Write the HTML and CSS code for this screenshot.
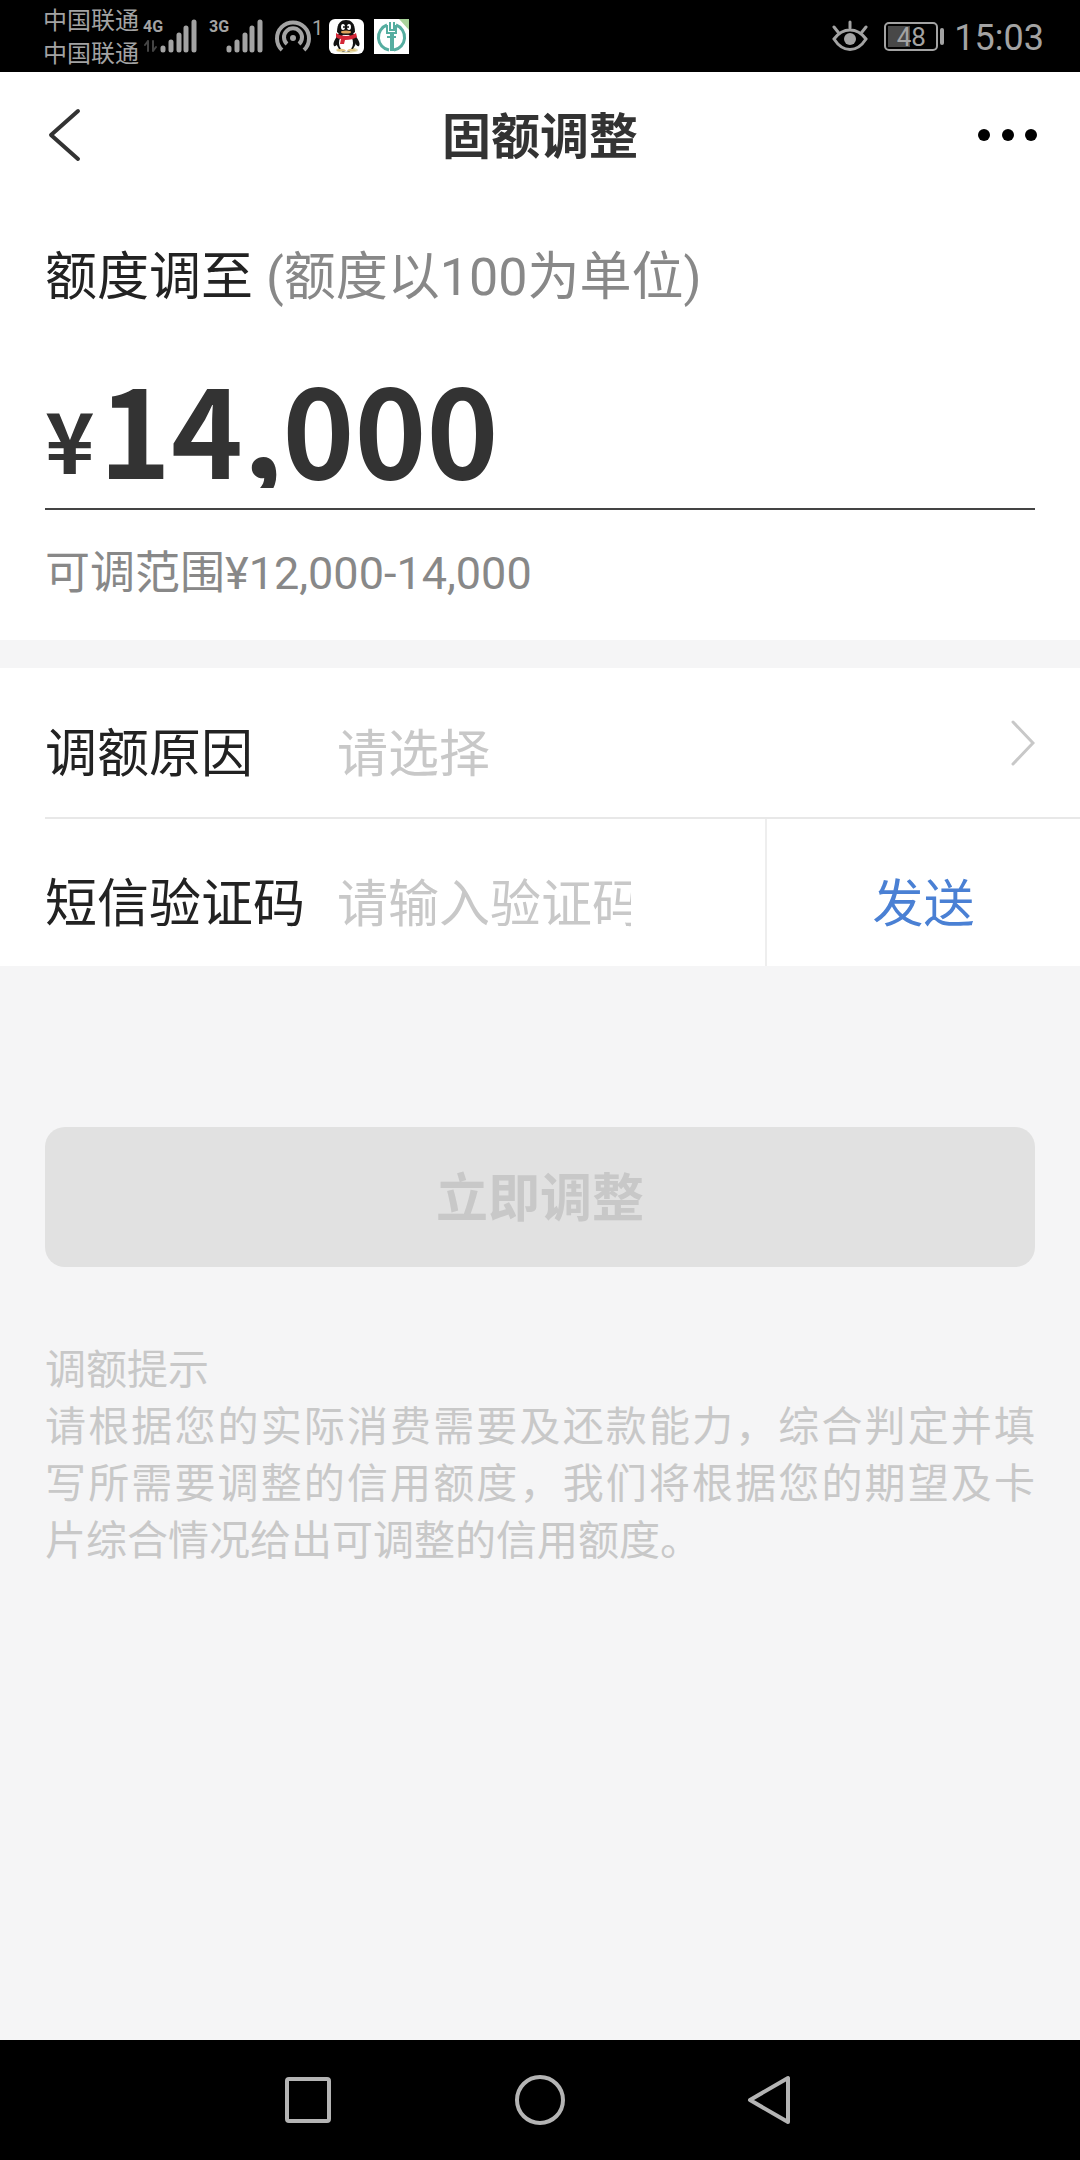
FILE: index.html
```html
<!DOCTYPE html>
<html lang="zh-CN">
<head>
<meta charset="utf-8">
<meta name="viewport" content="width=device-width, initial-scale=1">
<title>固额调整</title>
<link rel="stylesheet" href="styles.css">
</head>
<body>
<div class="screen">
  <div class="status">
    <div class="carriers"><span>中国联通</span><span>中国联通</span></div>
    <div class="network">
      <span class="net-type">4G</span>
      <svg class="signal" width="54" height="36" viewBox="0 0 54 36" fill="none" stroke="#a3a3a3" stroke-width="5" stroke-linecap="round">
        <path stroke="#444" stroke-width="2" d="M5 23v10M2 27l3-4M10 23v10M13 29l-3 4"/>
        <path d="M20 30v2M28 24v8M36 17v15M43 10v22M51 4v28"/>
      </svg>
    </div>
    <div class="network">
      <span class="net-type">3G</span>
      <svg class="signal" width="54" height="36" viewBox="0 0 54 36" fill="none" stroke="#a3a3a3" stroke-width="5" stroke-linecap="round">
        <path d="M20 30v2M28 24v8M36 17v15M43 10v22M51 4v28"/>
      </svg>
    </div>
    <div class="hotspot">
      <svg width="38" height="36" viewBox="0 0 38 36" fill="none" stroke="#a3a3a3" stroke-width="4">
        <path d="M8 32A16 16 0 1 1 30 32"/>
        <path d="M13 26A9 9 0 1 1 25 26"/>
        <circle cx="19" cy="20" r="3" fill="#a3a3a3" stroke="none"/>
      </svg>
      <span>1</span>
    </div>
    <svg class="app-icon" width="35" height="35" viewBox="0 0 35 35">
      <rect width="35" height="35" rx="6" fill="#fff"/>
      <ellipse cx="18" cy="31" rx="11" ry="3" fill="#e3dcae"/>
      <path d="M9 16C7 19 3 24 5 27c1 1 3-1 4-3zM26 16c2 3 6 8 4 11-1 1-3-1-4-3z" fill="#111"/>
      <ellipse cx="17" cy="22" rx="10" ry="11" fill="#111"/>
      <ellipse cx="17" cy="24" rx="7" ry="9" fill="#fff"/>
      <path d="M8 13C8 4 12 1 17 1s9 3 9 12c-3 4-15 4-18 0z" fill="#111"/>
      <ellipse cx="14" cy="8" rx="2" ry="3" fill="#fff"/>
      <ellipse cx="20" cy="8" rx="2" ry="3" fill="#fff"/>
      <circle cx="15" cy="8" r="1" fill="#111"/><circle cx="19" cy="8" r="1" fill="#111"/>
      <ellipse cx="17" cy="13" rx="5" ry="1.500" fill="#e0a25c"/>
      <path d="M7 14c5 4 15 4 20 0l1 4c-3 2-7 3-12 3l-1 4h-4l1-5c-2 0-4-1-5-2z" fill="#d32637"/>
      <path d="M8 32c0-3 8-3 9 0zM18 32c1-3 8-3 9 0z" fill="#e0c27c"/>
    </svg>
    <svg class="app-icon" width="35" height="35" viewBox="0 0 35 35" fill="none" stroke="#55ada0">
      <path fill="#fff" stroke="none" d="M0 0h35v35H0z"/>
      <path fill="#a9d39b" stroke="none" d="M25 0h10v11z"/>
      <path stroke-width="3" d="M13 6A13 13 0 0 0 15 31M22 6A13 13 0 0 1 20 31"/>
      <path stroke-width="2" d="M16 3v8h4V3M13 6v8h9V6M13 18h9M17 14v18M19 14v18"/>
    </svg>
    <div class="status-right">
      <svg width="36" height="32" viewBox="0 0 36 32" fill="none" stroke="#a3a3a3" stroke-width="3" stroke-linecap="round">
        <path d="M2 19C11 7 25 7 34 19 25 33 11 33 2 19zM18 8V2M6 12L2 7M30 12l4-5"/>
        <circle cx="18" cy="19" r="6" fill="#a3a3a3" stroke="none"/>
      </svg>
      <div class="battery"><span>48</span></div>
      <span class="clock">15:03</span>
    </div>
  </div>

  <header class="titlebar">
    <button class="icon-button" type="button" aria-label="返回">
      <svg width="36" height="56" viewBox="0 0 36 56" fill="none" stroke="#333" stroke-width="4" stroke-linecap="round" stroke-linejoin="round"><path d="M33 4L6 28l27 24"/></svg>
    </button>
    <h1>固额调整</h1>
    <button class="icon-button end" type="button" aria-label="更多">
      <svg width="60" height="12" viewBox="0 0 60 12"><circle cx="6" cy="6" r="6"/><circle cx="30" cy="6" r="6"/><circle cx="53" cy="6" r="6"/></svg>
    </button>
  </header>

  <main>
    <section class="limit">
      <label class="limit-label" for="amount">额度调至 <span class="unit">(额度以100为单位)</span></label>
      <div class="amount-row">
        <span class="currency">¥</span>
        <input class="amount" id="amount" type="text" inputmode="numeric" value="14,000">
      </div>
      <p class="range">可调范围¥12,000-14,000</p>
    </section>

    <section class="form">
      <div class="row">
        <label for="reason">调额原因</label>
        <select class="field" id="reason"><option>请选择</option></select>
        <svg class="chevron" width="24" height="46" viewBox="0 0 24 46" fill="none" stroke="#c8c8c8" stroke-width="3" stroke-linecap="round"><path d="M2 2l20 21L2 44"/></svg>
      </div>
      <div class="row code-row">
        <label for="code">短信验证码</label>
        <input class="field code" id="code" type="text" placeholder="请输入验证码">
        <button class="send" type="button">发送</button>
      </div>
    </section>

    <button class="submit" type="button" disabled>立即调整</button>

    <section class="tips">
      <h2>调额提示</h2>
      <p><span class="full">请根据您的实际消费需要及还款能力，综合判定并填</span><span class="full">写所需要调整的信用额度，我们将根据您的期望及卡</span>片综合情况给出可调整的信用额度。</p>
    </section>
  </main>

  <nav class="navbar">
    <button type="button" aria-label="最近任务"><svg width="50" height="52" viewBox="0 0 50 52"><rect x="3" y="5" width="42" height="42" rx="2"/></svg></button>
    <button type="button" aria-label="主屏幕"><svg width="52" height="52" viewBox="0 0 52 52"><circle cx="26" cy="26" r="23"/></svg></button>
    <button type="button" aria-label="返回"><svg width="50" height="52" viewBox="0 0 50 52"><path d="M42 4v44L4 26z"/></svg></button>
  </nav>
</div>
</body>
</html>
```
FILE: styles.css
```css
* {
  box-sizing: border-box;
}

body {
  margin: 0;
  background: #f5f5f6;
  color: #222;
  font-family: Roboto, "Noto Sans CJK SC", sans-serif;
}

h1, h2, p {
  margin: 0;
  font-weight: 400;
}

button, input, select {
  margin: 0;
  padding: 0;
  border: 0;
  border-radius: 0;
  background: none;
  color: inherit;
  font: inherit;
}

svg {
  display: block;
  flex: none;
}

.screen {
  display: flex;
  flex-direction: column;
  min-height: 100vh;
}

/* Status bar */
.status {
  display: flex;
  align-items: center;
  height: 72px;
  padding: 0 36px 0 43px;
  background: #000;
  color: #a3a3a3;
}

.carriers {
  display: flex;
  flex-direction: column;
  padding-top: 4px;
  font-size: 24px;
  line-height: 33px;
}

.network {
  position: relative;
  margin-left: 4px;
}

.network + .network {
  margin-left: 12px;
}

.net-type {
  position: absolute;
  top: 0;
  left: 0;
  font-size: 16px;
  font-weight: 700;
  line-height: 18px;
}

.hotspot {
  display: flex;
  margin-left: 11px;
  font-size: 20px;
  line-height: 20px;
}

.app-icon {
  margin-left: 10px;
}

.hotspot + .app-icon {
  margin-left: 6px;
}

.status-right {
  display: flex;
  align-items: center;
  margin-left: auto;
}

.battery {
  position: relative;
  width: 54px;
  height: 29px;
  margin: 0 16px;
  border: 2px solid #a3a3a3;
  border-radius: 5px;
  background: linear-gradient(#484848, #484848) 2px 2px / 22px 21px no-repeat;
  font-size: 26px;
  line-height: 26px;
  text-align: center;
}

.battery::after {
  content: "";
  position: absolute;
  top: 4px;
  right: -8px;
  width: 4px;
  height: 17px;
  border-radius: 2px;
  background: #a3a3a3;
}

.clock {
  padding-top: 3px;
  font-size: 36px;
  line-height: 40px;
}

/* Title bar */
.titlebar {
  display: grid;
  grid-template-columns: 1fr auto 1fr;
  align-items: center;
  height: 126px;
  padding: 0 42px;
  background: #fff;
}

.titlebar h1 {
  padding-top: 5px;
  color: #333;
  font-size: 49px;
  font-weight: 700;
  line-height: 64px;
}

.icon-button {
  justify-self: start;
  padding-left: 3px;
}

.icon-button.end {
  justify-self: end;
}

main {
  flex: 1;
}

/* Credit limit */
.limit {
  padding: 44px 45px 34px;
  background: #fff;
}

.limit-label {
  display: block;
  font-size: 52px;
  line-height: 72px;
}

.unit {
  color: #888;
}

.amount-row {
  display: flex;
  align-items: flex-end;
  height: 196px;
  padding-bottom: 20px;
  border-bottom: 2px solid #444;
  color: #333;
  font-family: "Noto Sans CJK SC", sans-serif;
  font-weight: 700;
}

.currency {
  width: 54px;
  font-size: 84px;
  line-height: 100px;
}

.amount {
  flex: 1;
  min-width: 0;
  height: 124px;
  font-size: 122px;
  line-height: 124px;
}

.range {
  padding-top: 32px;
  color: #888;
  font-size: 45px;
  line-height: 64px;
}

/* Form rows */
.form {
  margin-top: 28px;
  padding-left: 45px;
  background: #fff;
  font-size: 51px;
}

.row {
  display: flex;
  align-items: center;
  height: 149px;
}

.row label {
  width: 292px;
  padding-top: 24px;
  font-size: 52px;
  line-height: 72px;
}

.field {
  flex: 1;
  height: 72px;
  margin-top: 24px;
  appearance: none;
  color: #c8c8c8;
}

.field::placeholder {
  color: #c8c8c8;
  opacity: 1;
}

.chevron {
  margin-right: 45px;
}

.code-row {
  border-top: 2px solid #e8e8e8;
}

.code {
  min-width: 0;
  margin-right: 134px;
}

.send {
  width: 315px;
  height: 100%;
  padding-top: 14px;
  border-left: 2px solid #eee;
  color: #4a80d4;
}

.submit {
  display: block;
  width: calc(100% - 90px);
  height: 140px;
  margin: 161px 45px 0;
  padding-bottom: 6px;
  border-radius: 20px;
  background: #e1e1e1;
  color: #c8c8c8;
  font-size: 52px;
  font-weight: 700;
}

.tips {
  padding: 75px 45px 0;
  color: #c8c8c8;
  font-size: 41px;
  line-height: 57px;
}

.tips h2 {
  font-size: 41px;
}

.full {
  display: block;
  text-align-last: justify;
}

/* System navigation */
.navbar {
  display: flex;
  align-items: center;
  justify-content: center;
  gap: 180px;
  height: 120px;
  background: #000;
}

.navbar svg {
  fill: none;
  stroke: #b4b4b4;
  stroke-width: 4;
  stroke-linejoin: round;
}
```
